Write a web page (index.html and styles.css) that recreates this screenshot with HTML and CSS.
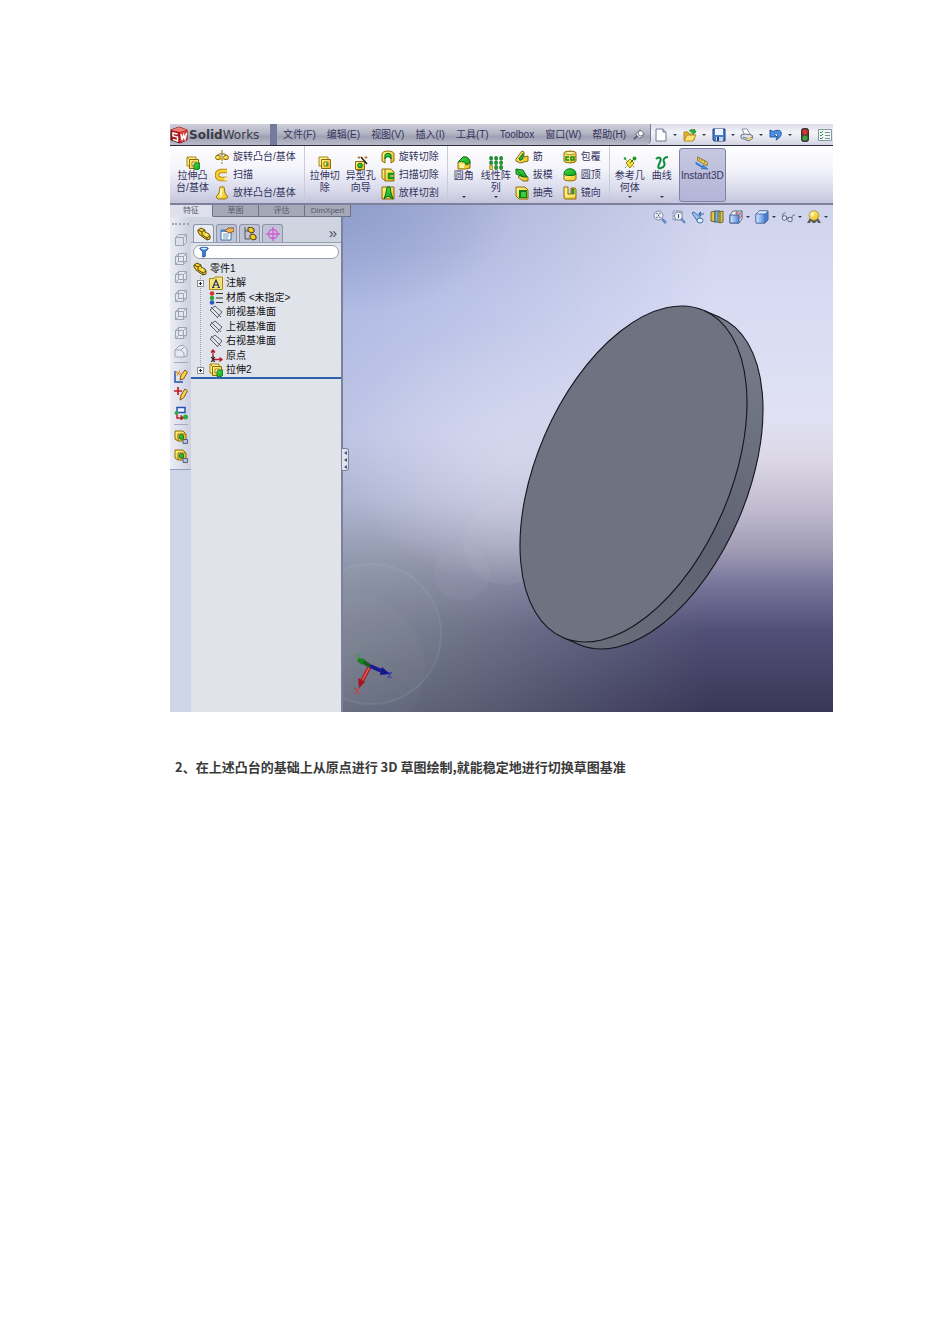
FILE: index.html
```html
<!DOCTYPE html>
<html lang="zh-CN">
<head>
<meta charset="utf-8">
<title>SolidWorks</title>
<link rel="stylesheet" href="styles.css">
</head>
<body>
<svg class="sprite" aria-hidden="true">
  <defs>
    <linearGradient id="gold" x1="0" y1="0" x2="1" y2="1"><stop offset="0" stop-color="#fffa8c"/><stop offset="1" stop-color="#eebb1c"/></linearGradient>
    <linearGradient id="leaf" x1="0" y1="0" x2="1" y2="1"><stop offset="0" stop-color="#4fe04a"/><stop offset="1" stop-color="#0b9f1c"/></linearGradient>
    <linearGradient id="sky" x1="0" y1="0" x2="1" y2="0"><stop offset="0" stop-color="#d6ebff"/><stop offset="1" stop-color="#4c86dc"/></linearGradient>
  </defs>
  <symbol id="logo" viewBox="0 0 18 18"><path d="M1 4l8-3 8 3v10l-7 3-9-3z" fill="#a81a20" stroke="#701014"/><path d="M1 4l8-3 8 3-7 2z" fill="#ef8078"/><path d="M10 6l7-2v10l-7 3z" fill="#dc3a3a"/><path d="M7.500 8L3 7v3l4.500 1v4L3 13.500M11 8l1.200 6 1.500-5 1.300 4L16.500 7" fill="none" stroke="#fff" stroke-width="1.500"/></symbol>
  <symbol id="boss" viewBox="0 0 14 14"><path d="M1 1h9v9H1z" fill="#fff68a" stroke="#a88312"/><path d="M1 1l3 3" stroke="#a88312"/><path d="M3.500 3.500h9v9h-9z" fill="url(#gold)" stroke="#8d6b0a"/><path d="M6 6h4v4H6z" fill="#fffbd2" stroke="#a88312"/><path d="M8 8l2-1h4v5l-1.500 1.500H8z" fill="url(#leaf)" stroke="#08701a" stroke-width=".8"/></symbol>
  <symbol id="cut" viewBox="0 0 14 14"><path d="M1 1h9v9H1z" fill="#fff68a" stroke="#a88312"/><path d="M3.500 3.500h9v9h-9z" fill="url(#gold)" stroke="#8d6b0a"/><path d="M6 6h4v4H6z" fill="#fff9b0" stroke="#8d6b0a"/><path d="M8 7h2v3H8z" fill="#36a83a"/></symbol>
  <symbol id="revolve" viewBox="0 0 14 14"><path d="M7 0v14" stroke="#8b6a12" stroke-dasharray="3 1"/><path d="M2 6c0-3 10-3 10 0" fill="none" stroke="#7a5b0c"/><ellipse cx="3" cy="7.500" rx="2.500" ry="2.200" fill="url(#gold)" stroke="#8d6b0a"/><ellipse cx="11" cy="7.500" rx="2.500" ry="2.200" fill="url(#gold)" stroke="#8d6b0a"/><path d="M5 8.500h4" stroke="#caa018" stroke-width="2"/></symbol>
  <symbol id="sweep" viewBox="0 0 14 14"><path d="M12 3H6a4 4 0 0 0 0 8h6" fill="none" stroke="#a27a0c" stroke-width="4.500"/><path d="M12 3H6a4 4 0 0 0 0 8h5.500" fill="none" stroke="#f7cf2b" stroke-width="3"/><path d="M9.500 9.500h2.500v3H9.500z" fill="#fff6b0"/></symbol>
  <symbol id="loft" viewBox="0 0 14 14"><path d="M5 1h4l1 6 3 4-3 2H3l-2-2 3-4z" fill="url(#gold)" stroke="#9a760c"/><path d="M6 3v8" stroke="#fffbd0" stroke-width="1.500"/></symbol>
  <symbol id="wizard" viewBox="0 0 14 14"><path d="M1.500 5.500h9v8h-9z" fill="url(#gold)" stroke="#8d6b0a"/><circle cx="6" cy="9.500" r="2.300" fill="url(#leaf)" stroke="#08701a"/><path d="M7 1l6 7" stroke="#222" stroke-width="1.500"/><path d="M5 0v3M3.500 1.500h3M12 0v3M10.500 1.500h3" stroke="#b9772a"/></symbol>
  <symbol id="revcut" viewBox="0 0 14 14"><path d="M1 4c0-4 12-4 12 0v7l-3 2V8c0-3-6-3-6 0v5l-3-2z" fill="url(#gold)" stroke="#8d6b0a"/><path d="M4 5c0-2 6-2 6 0v4c0-3-6-3-6 0z" fill="url(#leaf)" stroke="#08701a"/></symbol>
  <symbol id="sweepcut" viewBox="0 0 14 14"><path d="M1 1h9l3 3v9H4l-3-3z" fill="url(#gold)" stroke="#8d6b0a"/><path d="M4 1v12" stroke="#8d6b0a"/><path d="M13 6H8v4h5" fill="none" stroke="#149a22" stroke-width="2.500"/></symbol>
  <symbol id="loftcut" viewBox="0 0 14 14"><path d="M1 1h12v12H1z" fill="url(#gold)" stroke="#8d6b0a"/><path d="M6 1h3l1 6 2 6-5-3-4 3 2-6z" fill="url(#leaf)" stroke="#08701a"/></symbol>
  <symbol id="fillet" viewBox="0 0 14 14"><path d="M1 13V6l5-5h3c3 1 4 3 4 6v5l-4 1z" fill="url(#gold)" stroke="#8d6b0a"/><path d="M1 6l5-5h3c3 1 4 3 4 6L9 9c0-3-3-4-8-3z" fill="url(#leaf)" stroke="#08701a"/><path d="M3 8h4v4H3z" fill="#fff7a8"/></symbol>
  <symbol id="pattern" viewBox="0 0 14 14"><g fill="#18a428" stroke="#0b5d16" stroke-width=".6"><rect x=".7" y=".5" width="2.800" height="3.500" rx="1"/><rect x="5.700" y=".5" width="2.800" height="3.500" rx="1"/><rect x="10.700" y=".5" width="2.800" height="3.500" rx="1"/><rect x=".7" y="5" width="2.800" height="3.500" rx="1"/><rect x="5.700" y="5" width="2.800" height="3.500" rx="1"/><rect x="10.700" y="5" width="2.800" height="3.500" rx="1"/><rect x="5.700" y="9.500" width="2.800" height="4" rx="1"/><rect x="10.700" y="9.500" width="2.800" height="4" rx="1"/></g><path d="M.7 9.500h2.800v4H.7z" fill="#f0c72b" stroke="#8d6b0a" stroke-width=".6"/></symbol>
  <symbol id="rib" viewBox="0 0 14 14"><path d="M1 9l6-8 2 1v5l4-1v5l-8 2-4-2z" fill="url(#gold)" stroke="#8d6b0a"/><path d="M4 8.500l4-5v5l-3 2z" fill="url(#leaf)" stroke="#08701a"/></symbol>
  <symbol id="draft" viewBox="0 0 14 14"><path d="M8 6l5 3v4H8L3 9z" fill="url(#gold)" stroke="#8d6b0a"/><path d="M1 1l7 1 4 7H8L1 6z" fill="url(#leaf)" stroke="#08701a"/><path d="M1 1l7 8" stroke="#08701a" fill="none"/></symbol>
  <symbol id="shell" viewBox="0 0 14 14"><path d="M1 1h9l3 3v9H4l-3-3z" fill="url(#gold)" stroke="#8d6b0a"/><path d="M4 4h8v8H4z" fill="#0c7e1b"/><path d="M6 6h5v5H6z" fill="#37cf3f"/></symbol>
  <symbol id="wrap" viewBox="0 0 14 14"><path d="M1 3c0-2.500 12-2.500 12 0v8c0 2.500-12 2.500-12 0z" fill="url(#gold)" stroke="#8d6b0a"/><ellipse cx="7" cy="3" rx="5.500" ry="1.600" fill="#fff5a0" stroke="#8d6b0a" stroke-width=".7"/><path d="M6 7H3v3h3M8 10V7h3v3z" fill="none" stroke="#0f8f20" stroke-width="1.500"/></symbol>
  <symbol id="dome" viewBox="0 0 14 14"><path d="M1 6h12v5c0 2.500-12 2.500-12 0z" fill="url(#gold)" stroke="#8d6b0a"/><path d="M1 6c0-7 12-7 12 0 0 2-12 2-12 0z" fill="url(#leaf)" stroke="#08701a"/></symbol>
  <symbol id="mirror" viewBox="0 0 14 14"><path d="M1 1h4v7h3V2h4l1 1v10H2l-1-2z" fill="url(#gold)" stroke="#8d6b0a"/><path d="M3 2v8h8V4" fill="none" stroke="#fff7a0"/><path d="M9 3h2v5H9z" fill="#33b33a" stroke="#08701a" stroke-width=".7"/></symbol>
  <symbol id="refgeo" viewBox="0 0 14 14"><path d="M1 2l11 10M2 12L12 2" stroke="#68a030" stroke-dasharray="2 1"/><path d="M7 3l4 4-4 5-4-5z" fill="#f5df3b" stroke="#a08010"/><circle cx="11.500" cy="2.500" r="2" fill="#1b9e2d"/><circle cx="2" cy="2.500" r="1.300" fill="#1b9e2d"/><path d="M7 7l4-4" stroke="#137d1e"/></symbol>
  <symbol id="curve" viewBox="0 0 14 14"><path d="M1 3c3-3 6-1 4 3s-3 7 1 6 4-4 3-6 0-5 4-5" fill="none" stroke="#0c8d3a" stroke-width="2"/></symbol>
  <symbol id="instant" viewBox="0 0 16 16"><path d="M3 1l11 6v4L3 5z" fill="#f6dc55" stroke="#826d24"/><path d="M5 3v2M8 4v2M11 6v2" stroke="#826d24"/><path d="M1 7l8 5 0-2 6 5-8-.5 1-1.500L1 9z" fill="#3c8de0" stroke="#1c5fb0" stroke-width=".6"/></symbol>
  <symbol id="pin" viewBox="0 0 14 14"><path d="M1 12l5-5" stroke="#444a5c" stroke-width="1.500"/><path d="M3 6l5 5 2-2 3-3-5-5-3 3z" fill="#e8eaf2" stroke="#4c5264"/><circle cx="9" cy="5" r="3" fill="#fff" stroke="#6a7082"/></symbol>
  <symbol id="new" viewBox="0 0 14 14"><path d="M2 1h7l3 3v9H2z" fill="#fff" stroke="#6d7a94"/><path d="M9 1v3h3" fill="#c8d2e4" stroke="#6d7a94"/></symbol>
  <symbol id="open" viewBox="0 0 14 14"><path d="M1 12V4h4l1 2h5v6z" fill="#e6b62c" stroke="#b08a28"/><path d="M1 13l3-6h9l-3 6z" fill="#ffe376" stroke="#b08a28"/><path d="M6 3c2-2 4-2 5 0V1l2 3-3 2" fill="#33b23b" stroke="#14801f" stroke-width=".8"/></symbol>
  <symbol id="save" viewBox="0 0 14 14"><path d="M1 1h12v12H2l-1-1z" fill="#4a7cc8" stroke="#1e3f82"/><path d="M3 1h8v6H3z" fill="#eef4ff"/><path d="M4 9h7v4H4z" fill="#c5d5ee"/><path d="M5 9h2v4H5z" fill="#1e3f82"/></symbol>
  <symbol id="print" viewBox="0 0 14 14"><path d="M2 1h5l3 5-5 2z" fill="#fff" stroke="#8790a8"/><path d="M1 7l4-1 7 1 1 3-4 3-8-3z" fill="#dfe3ec" stroke="#6d768c"/><path d="M3 9l6 2 3-2" stroke="#6d768c" fill="none"/><path d="M7 10l3-1 2 2-3 1z" fill="#f0d050"/></symbol>
  <symbol id="undo" viewBox="0 0 14 14"><path d="M1 2v7h7L5.500 6.500C8 4 10 6 7 12c8-4 7-13-3-8.500z" fill="#4e91dc" stroke="#1e57a8"/></symbol>
  <symbol id="light" viewBox="0 0 14 14"><rect x="3.500" y=".5" width="7" height="13" rx="2" fill="#5a3b3b" stroke="#333"/><circle cx="7" cy="4" r="2.500" fill="#e33028"/><circle cx="7" cy="10" r="2.500" fill="#2fae3a"/></symbol>
  <symbol id="options" viewBox="0 0 14 14"><path d="M.5 1.500h13v11H.5z" fill="#f2f8f6" stroke="#8298a2"/><path d="M7 4.500h5M7 7.500h5M7 10.500h5" stroke="#75909a"/><path d="M2 4l1 1 2-2M2 7l1 1 2-2M2 10l1 1 2-2" fill="none" stroke="#2a9c44"/></symbol>
  <symbol id="zoomfit" viewBox="0 0 14 14"><circle cx="5.500" cy="5.500" r="4.500" fill="#eaf1fa" stroke="#7e8a9e"/><path d="M9 9l4 4" stroke="#5d8ac0" stroke-width="2.500"/><path d="M3.500 3.500h1M6.500 3.500h1M3.500 7.500h1M6.500 7.500h1M5 5.500h1" stroke="#333c50" stroke-width="1.300"/></symbol>
  <symbol id="zoomarea" viewBox="0 0 14 14"><path d="M1 1h9v9H1z" fill="none" stroke="#7e8a9e" stroke-dasharray="2 1"/><circle cx="6.500" cy="6" r="4" fill="#eaf1fa" stroke="#7e8a9e"/><path d="M9.500 9l3.500 4" stroke="#5d8ac0" stroke-width="2"/><path d="M6.500 4v4" stroke="#445"/></symbol>
  <symbol id="prev" viewBox="0 0 14 14"><path d="M1 3l6 9 4-3-8-7z" fill="#9cc4ee" stroke="#3f6ea8"/><ellipse cx="9" cy="10.500" rx="3" ry="2.500" fill="#e3f0fc" stroke="#3f6ea8"/><path d="M13 4H8M10 2L8 4l2 2" fill="none" stroke="#2e68b0" stroke-width="1.200"/></symbol>
  <symbol id="section" viewBox="0 0 14 14"><path d="M1 2l4-1v11l-4-1z" fill="#e5c63a" stroke="#6d6430"/><path d="M5 1h5v11H5z" fill="#7bb6ec" stroke="#375b88"/><path d="M8 2l5-1v11l-3 1-2-1z" fill="#e5c63a" stroke="#6d6430"/><path d="M10 2v10" stroke="#375b88"/></symbol>
  <symbol id="orient" viewBox="0 0 14 14"><path d="M1 5l3-4h9v8l-3 4H1z" fill="#f4f7fc" stroke="#5b6884"/><path d="M1 5h9v8H1z" fill="url(#sky)" stroke="#46639a"/><path d="M10 5l3-4M8 1v4" stroke="#5b6884"/><path d="M6 3h5M11 6v3M12 4v3" stroke="#c65050"/></symbol>
  <symbol id="display" viewBox="0 0 14 14"><path d="M1 4l3-3h9v9l-3 3H1z" fill="#4c83d6" stroke="#44639c"/><path d="M1 4l3-3h9l-3 3z" fill="#e6f2ff" stroke="#44639c" stroke-width=".6"/><path d="M1 4h9v9H1z" fill="url(#sky)" stroke="#44639c" stroke-width=".6"/></symbol>
  <symbol id="glasses" viewBox="0 0 14 14"><circle cx="3.500" cy="8" r="2.300" fill="#dfe6f2" stroke="#5d687e"/><circle cx="9" cy="9.500" r="2.300" fill="#dfe6f2" stroke="#5d687e"/><path d="M1.500 7c0-3 1-4 3-4M11 8.500c0-3 1-4 3-3M5.500 7.500l2 1" fill="none" stroke="#5d687e"/></symbol>
  <symbol id="scene" viewBox="0 0 14 14"><path d="M0 13l3-5h8l3 5h-3l-1-2-2 2H6l-2-2-1 2z" fill="#5b5b58"/><circle cx="7" cy="5.500" r="4.800" fill="url(#gold)" stroke="#a17a18" stroke-width=".7"/><circle cx="5.500" cy="4" r="1.500" fill="#fff9cc"/></symbol>
  <symbol id="part" viewBox="0 0 14 14"><path d="M1 3l3-2 4 2v2l4 2 1 2v3l-3 1-7-5-2-3z" fill="#f5d133" stroke="#5a480c"/><path d="M1 3l4 2 3-2M5 5v3l5 3 3-2M10 11v2" fill="none" stroke="#5a480c"/><circle cx="9.500" cy="7.500" r="1" fill="#fff7b0"/></symbol>
  <symbol id="prop" viewBox="0 0 14 14"><path d="M1 3h10v10H1z" fill="#fff" stroke="#3a6fa8"/><path d="M1 3h7v2H1z" fill="#4f8fd0"/><path d="M3 7h6M3 9h6M3 11h5" stroke="#6c98c8"/><path d="M5 4l3-3 6 0v3l-4 2z" fill="#f1b45c" stroke="#8d5a1c"/></symbol>
  <symbol id="config" viewBox="0 0 14 14"><path d="M2 0v12h5M2 4h5" stroke="#555" fill="none"/><path d="M5 1l3-1 3 2v3L8 6 5 4z" fill="#f0cb2e" stroke="#4a3a08"/><path d="M7 8l3-1 3 2v3l-3 1-3-2z" fill="#f0cb2e" stroke="#4a3a08"/></symbol>
  <symbol id="target" viewBox="0 0 14 14"><circle cx="7" cy="7" r="4.500" fill="none" stroke="#cf5ccf" stroke-width="1.300"/><path d="M7 0v14M0 7h14" stroke="#cf5ccf" stroke-width="1.300"/></symbol>
  <symbol id="funnel" viewBox="0 0 14 14"><path d="M2 3c0-2 10-2 10 0L8.500 7v5l-3 1V7z" fill="#3f83d6" stroke="#174c94"/><ellipse cx="7" cy="3" rx="3.500" ry="1" fill="#d8ecff"/></symbol>
  <symbol id="note" viewBox="0 0 14 14"><path d="M.5 2.500H5L6 1h7.500v12.500H.5z" fill="#f8e373" stroke="#a8871c"/><path d="M4 11l3-7 3 7M5 9h4M3 11.500h2.500M8.500 11.500H11" fill="none" stroke="#25356e" stroke-width="1.200"/></symbol>
  <symbol id="material" viewBox="0 0 14 14"><circle cx="3" cy="2.500" r="2.300" fill="#d63434"/><circle cx="3" cy="7" r="2.300" fill="#2da53c"/><circle cx="3" cy="11.500" r="2.300" fill="#2f57c4"/><path d="M7 2.500h7M7 7h7M7 11.500h7" stroke="#333" stroke-width="1.200"/></symbol>
  <symbol id="plane" viewBox="0 0 14 14"><path d="M1 5l5-4M2 2l10 10M6 1l7 6M1 5l8 8M8 13l5-6" fill="none" stroke="#5b5f68"/></symbol>
  <symbol id="origin" viewBox="0 0 14 14"><path d="M4 10V1M2 3.500L4 1l2 2.500M4 10.500h9M10.500 8.500l2.500 2-2.500 2" fill="none" stroke="#b51c24" stroke-width="1.300"/><path d="M2 8l4 5M6 8l-4 5M4 7v6" stroke="#222"/></symbol>
  <symbol id="wire" viewBox="0 0 14 14"><path d="M1.500 4.500l3-3h8v8l-3 3h-8z" fill="#e4e7ef" stroke="#9ea3b0"/><path d="M1.500 4.500h8v8M9.500 4.500l3-3M4.500 1.500v8h8M4.500 9.500l-3 3" fill="none" stroke="#9ea3b0"/></symbol>
  <symbol id="cube" viewBox="0 0 14 14"><path d="M1.500 4.500l3-3h8v8l-3 3h-8z" fill="#dde0ea" stroke="#9ea3b0"/><path d="M1.500 4.500h8v8M9.500 4.500l3-3" fill="none" stroke="#9ea3b0"/></symbol>
  <symbol id="house" viewBox="0 0 14 14"><path d="M1 6l4-4 4-1 4 4v7l-3 1H1zM1 6h6l3 3v4M7 6l4-4" fill="#e6e9f1" stroke="#9ea3b0"/></symbol>
  <symbol id="sketch" viewBox="0 0 14 14"><path d="M1 2v11h8" fill="none" stroke="#2452b0" stroke-width="1.500"/><path d="M6 11l1-5 4-5 2.500 2-4 7z" fill="#f9d04a" stroke="#80591a"/><path d="M2 2l5 5M6 1L3 7M1 4h6" stroke="#e19427"/></symbol>
  <symbol id="sketch3d" viewBox="0 0 14 14"><path d="M4 0v8M0 4h8" stroke="#c61e24" stroke-width="1.700"/><path d="M6 13l1-5 4-6 2.500 2-4 7z" fill="#f9d04a" stroke="#80591a"/></symbol>
  <symbol id="relation" viewBox="0 0 14 14"><path d="M3 1.500h8v5H3z" fill="#eef4ff" stroke="#2452b0" stroke-width="1.500"/><path d="M3 8v4h6M6.500 9.500L9 12l-2.500 2" fill="none" stroke="#b51c24" stroke-width="1.400"/><circle cx="2.500" cy="7" r="2" fill="#2fae3a"/><circle cx="11.500" cy="11" r="2.500" fill="#2fae3a"/></symbol>
  <symbol id="copybody" viewBox="0 0 14 14"><path d="M1 1h8l3 3v7H4L1 9z" fill="url(#gold)" stroke="#8d6b0a"/><path d="M4 4h8M4 4v7" stroke="#8d6b0a"/><circle cx="7.500" cy="7" r="2.300" fill="url(#leaf)" stroke="#08701a"/><path d="M9 9.500h4.500v4H9z" fill="#b9c3dc" stroke="#546080"/></symbol>
</svg>

<main class="page">
  <section class="app" aria-label="SolidWorks">
    <header class="titlebar">
      <div class="menubar">
        <span class="brand"><svg class="brand-icon"><use href="#logo"/></svg><span><b>Solid</b>Works</span></span>
        <nav class="menu">
          <a href="#">文件(F)</a><a href="#">编辑(E)</a><a href="#">视图(V)</a><a href="#">插入(I)</a><a href="#">工具(T)</a><a href="#">Toolbox</a><a href="#">窗口(W)</a><a href="#">帮助(H)</a>
        </nav>
        <button class="pin" aria-label="固定"><svg class="icon small"><use href="#pin"/></svg></button>
      </div>
      <div class="quick">
        <button class="drop" aria-label="新建"><svg class="icon"><use href="#new"/></svg></button>
        <button class="drop" aria-label="打开"><svg class="icon"><use href="#open"/></svg></button>
        <button class="drop" aria-label="保存"><svg class="icon"><use href="#save"/></svg></button>
        <button class="drop" aria-label="打印"><svg class="icon"><use href="#print"/></svg></button>
        <button class="drop" aria-label="撤消"><svg class="icon"><use href="#undo"/></svg></button>
        <button aria-label="重建"><svg class="icon"><use href="#light"/></svg></button>
        <button aria-label="选项"><svg class="icon"><use href="#options"/></svg></button>
      </div>
    </header>

    <div class="ribbon">
      <div class="group">
        <button class="big wide"><svg class="icon"><use href="#boss"/></svg><span>拉伸凸<br>台/基体</span></button>
        <div class="stack">
          <button><svg class="icon"><use href="#revolve"/></svg>旋转凸台/基体</button>
          <button><svg class="icon"><use href="#sweep"/></svg>扫描</button>
          <button><svg class="icon"><use href="#loft"/></svg>放样凸台/基体</button>
        </div>
      </div>
      <div class="group">
        <button class="big"><svg class="icon"><use href="#cut"/></svg><span>拉伸切<br>除</span></button>
        <button class="big"><svg class="icon"><use href="#wizard"/></svg><span>异型孔<br>向导</span></button>
        <div class="stack">
          <button><svg class="icon"><use href="#revcut"/></svg>旋转切除</button>
          <button><svg class="icon"><use href="#sweepcut"/></svg>扫描切除</button>
          <button><svg class="icon"><use href="#loftcut"/></svg>放样切割</button>
        </div>
      </div>
      <div class="group tight">
        <button class="big more"><svg class="icon"><use href="#fillet"/></svg><span>圆角</span></button>
        <button class="big more"><svg class="icon"><use href="#pattern"/></svg><span>线性阵<br>列</span></button>
        <div class="stack">
          <button><svg class="icon"><use href="#rib"/></svg>筋</button>
          <button><svg class="icon"><use href="#draft"/></svg>拔模</button>
          <button><svg class="icon"><use href="#shell"/></svg>抽壳</button>
        </div>
        <div class="stack second">
          <button><svg class="icon"><use href="#wrap"/></svg>包覆</button>
          <button><svg class="icon"><use href="#dome"/></svg>圆顶</button>
          <button><svg class="icon"><use href="#mirror"/></svg>镜向</button>
        </div>
      </div>
      <div class="group last">
        <button class="big more"><svg class="icon"><use href="#refgeo"/></svg><span>参考几<br>何体</span></button>
        <button class="big more"><svg class="icon"><use href="#curve"/></svg><span>曲线</span></button>
        <button class="big pressed"><svg class="icon"><use href="#instant"/></svg><span>Instant3D</span></button>
      </div>
    </div>

    <div class="workspace">
      <div class="side">
        <div class="ribbon-tabs">
          <button class="current">特征</button><button>草图</button><button>评估</button><button>DimXpert</button>
        </div>
        <div class="panes">
          <div class="rail">
            <div class="tools">
              <button aria-label="前视"><svg class="icon"><use href="#cube"/></svg></button>
              <button aria-label="后视"><svg class="icon"><use href="#wire"/></svg></button>
              <button aria-label="左视"><svg class="icon"><use href="#wire"/></svg></button>
              <button aria-label="右视"><svg class="icon"><use href="#wire"/></svg></button>
              <button aria-label="上视"><svg class="icon"><use href="#wire"/></svg></button>
              <button aria-label="下视"><svg class="icon"><use href="#wire"/></svg></button>
              <button aria-label="等轴测"><svg class="icon"><use href="#house"/></svg></button>
              <hr>
              <button aria-label="草图绘制"><svg class="icon"><use href="#sketch"/></svg></button>
              <button aria-label="3D草图"><svg class="icon"><use href="#sketch3d"/></svg></button>
              <button aria-label="几何关系"><svg class="icon"><use href="#relation"/></svg></button>
              <hr>
              <button aria-label="复制实体"><svg class="icon"><use href="#copybody"/></svg></button>
              <button aria-label="移动实体"><svg class="icon"><use href="#copybody"/></svg></button>
            </div>
          </div>
          <div class="manager">
            <div class="manager-tabs">
              <button class="current" aria-label="设计树"><svg class="icon"><use href="#part"/></svg></button>
              <button aria-label="属性"><svg class="icon"><use href="#prop"/></svg></button>
              <button aria-label="配置"><svg class="icon"><use href="#config"/></svg></button>
              <button aria-label="尺寸专家"><svg class="icon"><use href="#target"/></svg></button>
              <button class="expand">»</button>
            </div>
            <label class="filter"><svg class="icon small"><use href="#funnel"/></svg><input type="text" aria-label="过滤器"></label>
            <ul class="tree">
              <li class="root"><svg class="icon"><use href="#part"/></svg>零件1</li>
              <li><button class="plus" aria-label="展开注解"></button><svg class="icon"><use href="#note"/></svg>注解</li>
              <li><svg class="icon"><use href="#material"/></svg>材质 &lt;未指定&gt;</li>
              <li><svg class="icon"><use href="#plane"/></svg>前视基准面</li>
              <li><svg class="icon"><use href="#plane"/></svg>上视基准面</li>
              <li><svg class="icon"><use href="#plane"/></svg>右视基准面</li>
              <li><svg class="icon"><use href="#origin"/></svg>原点</li>
              <li><button class="plus" aria-label="展开拉伸2"></button><svg class="icon"><use href="#boss"/></svg>拉伸2</li>
            </ul>
            <button class="handle" aria-label="折叠面板"><i></i><i></i><i></i></button>
          </div>
        </div>
      </div>
      <div class="view">
        <svg class="model" viewBox="0 0 490 507" role="img" aria-label="圆盘模型">
          <defs>
            <linearGradient id="bgRight" x1="0" y1="0" x2="0" y2="1">
              <stop offset="0" stop-color="#d0d3ec"/><stop offset=".2" stop-color="#d8dbf3"/><stop offset=".42" stop-color="#e0e1f3"/><stop offset=".5" stop-color="#dcd8e6"/><stop offset=".6" stop-color="#c0bbcf"/><stop offset=".68" stop-color="#a09cb5"/><stop offset=".75" stop-color="#77749a"/><stop offset=".84" stop-color="#514f76"/><stop offset="1" stop-color="#3a3858"/>
            </linearGradient>
            <linearGradient id="bgLeft" x1="0" y1="0" x2="0" y2="1">
              <stop offset="0" stop-color="#a0aad3"/><stop offset=".2" stop-color="#b0bbe4"/><stop offset=".45" stop-color="#bec4e5"/><stop offset=".58" stop-color="#b0b6d2"/><stop offset=".7" stop-color="#9298ad"/><stop offset=".82" stop-color="#7d8494"/><stop offset="1" stop-color="#666c7e"/>
            </linearGradient>
            <linearGradient id="fade" x1="0" y1="0" x2="1" y2="0"><stop offset="0" stop-color="#fff"/><stop offset=".25" stop-color="#bbb"/><stop offset=".75" stop-color="#000"/></linearGradient>
            <mask id="leftMask"><rect width="490" height="507" fill="url(#fade)"/></mask>
            <radialGradient id="glow"><stop offset="0" stop-color="#d8daf0" stop-opacity=".7"/><stop offset="1" stop-color="#d8daf0" stop-opacity="0"/></radialGradient>
            <radialGradient id="corner"><stop offset="0" stop-color="#8797c8" stop-opacity=".7"/><stop offset="1" stop-color="#8797c8" stop-opacity="0"/></radialGradient>
            <linearGradient id="rim" x1="0" y1="0" x2="0" y2="1"><stop offset="0" stop-color="#777d8c"/><stop offset=".6" stop-color="#5f6272"/><stop offset="1" stop-color="#696c79"/></linearGradient>
          </defs>
          <rect width="490" height="507" fill="url(#bgRight)"/>
          <rect width="490" height="507" fill="url(#bgLeft)" mask="url(#leftMask)"/>
          <ellipse cx="0" cy="0" rx="170" ry="110" fill="url(#corner)"/>
          <ellipse cx="170" cy="250" rx="170" ry="130" fill="url(#glow)"/>
          <circle cx="28" cy="429" r="70" fill="#dbe3e4" fill-opacity=".03" stroke="#cfd8d8" stroke-opacity=".1" stroke-width="2"/>
          <circle cx="10" cy="462" r="72" fill="#dbe3e4" fill-opacity=".03"/>
          <circle cx="119" cy="368" r="28" fill="#d9dcea" fill-opacity=".05"/>
          <circle cx="162" cy="338" r="42" fill="#e2e4f0" fill-opacity=".05"/>
          <g stroke="#15161d" stroke-width="1.100">
            <ellipse cx="306.500" cy="276" rx="96.900" ry="178.100" transform="rotate(23.300 306.500 276)" fill="url(#rim)"/>
            <path d="M361.200 105.600l16 7L236 439.400l-16-7z" fill="#6d717f" stroke="none"/>
            <path d="M361.200 105.600l16 7M236 439.400l-16-7" fill="none"/>
            <ellipse cx="290.500" cy="269" rx="96.900" ry="178.100" transform="rotate(23.300 290.500 269)" fill="#6f7280"/>
          </g>
          <g class="axes">
            <path d="M27 461l-8 15" stroke="#a82026" stroke-width="4"/><path d="M27 461l-8 15" stroke="#ee5d5a" stroke-width="1.500"/>
            <path d="M15 473l7 4-6 6z" fill="#a3161b"/>
            <path d="M27 461l-8-5" stroke="#175f20" stroke-width="4"/><path d="M15 453l7 1-3 6-5-4z" fill="#188126"/>
            <path d="M27 461l14 6" stroke="#1b1b94" stroke-width="4"/><path d="M39 462l8 7-10 1z" fill="#16168c"/>
            <text x="12" y="455" fill="#2a9a3a">Y</text><text x="44" y="473" fill="#2222cc">Z</text><text x="11" y="489" fill="#e02a2a">X</text>
          </g>
        </svg>
        <div class="heads-up">
          <button aria-label="整屏显示"><svg class="icon"><use href="#zoomfit"/></svg></button>
          <button aria-label="局部放大"><svg class="icon"><use href="#zoomarea"/></svg></button>
          <button aria-label="上一视图"><svg class="icon"><use href="#prev"/></svg></button>
          <button aria-label="剖面视图"><svg class="icon"><use href="#section"/></svg></button>
          <button class="drop" aria-label="视图定向"><svg class="icon"><use href="#orient"/></svg></button>
          <button class="drop" aria-label="显示样式"><svg class="icon"><use href="#display"/></svg></button>
          <button class="drop" aria-label="隐藏/显示"><svg class="icon"><use href="#glasses"/></svg></button>
          <button class="drop" aria-label="应用布景"><svg class="icon"><use href="#scene"/></svg></button>
        </div>
      </div>
    </div>
  </section>
  <p class="caption">2、在上述凸台的基础上从原点进行 3D 草图绘制,就能稳定地进行切换草图基准</p>
</main>
</body>
</html>
```
FILE: styles.css
```css
* { box-sizing: border-box; }
body { margin: 0; background: #fff; font-family: "Liberation Sans", "Noto Sans CJK SC", sans-serif; }
button { margin: 0; padding: 0; border: 0; background: none; font: inherit; color: inherit; }
.sprite { position: absolute; width: 0; height: 0; }
.page { padding: 124px 117px 40px 170px; }
.app { font-size: 10px; line-height: 12px; color: #33335c; }
.icon { display: block; flex: none; width: 14px; height: 14px; }
.icon.small { width: 12px; height: 12px; }

/* title bar */
.titlebar { display: flex; height: 22px; background: linear-gradient(#d9dae6, #f4f4fa 40%, #d3d4e2); border-bottom: 1px solid #2b2c3c; }
.menubar { display: flex; align-items: center; width: 481px; background: linear-gradient(#cfd0da, #b3b5c4 45%, #9fa1b3 60%, #b9bbca); border-right: 1px solid #777a90; border-radius: 0 0 5px 0; }
.brand { display: flex; align-items: center; align-self: stretch; gap: 1px; width: 107px; border-right: 7px solid #747a9c; font-family: "DejaVu Sans", sans-serif; font-size: 12px; color: #3b3b46; }
.brand-icon { width: 18px; height: 18px; }
.menu { display: flex; gap: 11px; padding-left: 6px; }
.menu a { color: #33335c; text-decoration: none; white-space: nowrap; }
.pin { margin-left: auto; margin-right: 5px; }
.quick { display: flex; flex: 1; align-items: center; justify-content: space-between; padding: 0 1px 0 3px; }
.drop { display: flex; align-items: center; gap: 5px; }
.drop::after, .more::after { content: ""; border: 2px solid transparent; border-top-color: #33364e; border-bottom: 0; }

/* ribbon */
.ribbon { display: flex; height: 59px; background: linear-gradient(#fefeff, #f4f4fb 40%, #dadbec 75%, #c4c5dc); border-bottom: 2px solid #7d819c; }
.group { display: flex; gap: 4px; padding: 0 8px 0 4px; border-right: 1px solid #c9cadb; }
.group.tight { gap: 0; padding-left: 0; }
.group.last { gap: 0; padding-right: 0; border-right: 0; }
.tight .stack { margin-left: 3px; }
.tight .second { margin-left: 10px; }
.big { position: relative; display: flex; flex-direction: column; align-items: center; width: 32px; padding-top: 10px; white-space: nowrap; }
.big.wide { width: 37px; }
.more::after { position: absolute; bottom: 5px; }
.stack { display: flex; flex-direction: column; gap: 4px; padding-top: 4px; }
.stack button { display: flex; align-items: center; gap: 4px; white-space: nowrap; }
.big.pressed { width: 47px; margin: 2px 0 1px 1px; padding-top: 7px; background: linear-gradient(#c6c7e0, #b3b5d8); border: 1px solid #7f82a4; border-radius: 3px; }

/* workspace */
.workspace { display: flex; }
.side { position: relative; z-index: 1; display: flex; flex-direction: column; flex: none; width: 173px; }
.ribbon-tabs { display: grid; grid-template-columns: 43px 46px 46px 46px; width: 181px; height: 12px; font-size: 8px; line-height: 9px; color: #565a6c; }
.ribbon-tabs button { background: #a5a8b7; border: solid #6e7287; border-width: 0 1px 1px 0; }
.ribbon-tabs .current { background: #dfe0ec; border-bottom-color: #dfe0ec; }
.panes { display: flex; flex: 1; }
.rail { flex: none; width: 21px; background: #cdd5e6; }
.tools { display: flex; flex-direction: column; align-items: center; padding: 6px 0 4px; background: linear-gradient(90deg, #eceef5, #ccd0e0); border-bottom: 1px solid #999fb4; }
.tools::before { content: ""; width: 17px; margin-bottom: 6px; border-top: 2px dotted #9ea4b6; }
.tools button { display: grid; place-items: center; height: 18px; }
.tools button:nth-of-type(even) { height: 19px; }
.tools hr { width: 14px; margin: 2px 0 3px; border: 0; border-top: 1px solid #a6acbd; }
.manager { position: relative; flex: 1; min-width: 0; background: #e0e3e9; border-right: 2px solid #7b839b; }
.manager-tabs { display: flex; align-items: flex-end; gap: 2px; height: 26px; padding: 0 4px 0 2px; background: #cfd4e1; border-bottom: 1px solid #979db2; }
.manager-tabs button { display: grid; place-items: center; width: 21px; height: 18px; background: #bfc5d6; border: 1px solid #8d93a9; border-bottom: 0; border-radius: 3px 3px 0 0; }
.manager-tabs .current { background: #e8ebf1; }
.manager-tabs .expand { width: auto; margin-left: auto; background: none; border: 0; font-size: 15px; color: #4a5068; }
.filter { display: flex; align-items: center; height: 14px; margin: 2px; padding-left: 4px; background: #fff; border: 1px solid #969caf; border-radius: 7px; }
.filter input { flex: 1; min-width: 0; height: 10px; padding: 0 4px; border: 0; background: none; font-size: 10px; outline: 0; }
.tree { position: relative; margin: 0; padding: 0; list-style: none; color: #101014; border-bottom: 2px solid #2c62a8; }
.tree::before { content: ""; position: absolute; top: 15px; bottom: 8px; left: 9px; border-left: 1px dotted #9a9fab; }
.tree li { position: relative; display: flex; align-items: center; gap: 3px; height: 14px; padding-left: 18px; white-space: nowrap; }
.tree li:nth-child(odd) { height: 15px; }
.tree .root { padding-left: 2px; }
.plus { position: absolute; left: 6px; width: 7px; height: 7px; background: linear-gradient(#222, #222) center / 3px 1px no-repeat, linear-gradient(#222, #222) center / 1px 3px no-repeat, #fff; border: 1px solid #8a8f9c; }
.handle { position: absolute; top: 231px; right: -8px; display: grid; place-content: center; gap: 3px; width: 7px; height: 23px; background: #dfe3ee; border: 1px solid #7b839b; border-left: 0; border-radius: 0 3px 3px 0; }
.handle i { border: 2px solid transparent; border-right: 3px solid #4c5578; border-left: 0; }

/* viewport */
.view { position: relative; flex: 1; min-width: 0; }
.model { display: block; width: 100%; height: auto; }
.axes { font: 9px "Liberation Serif", serif; }
.heads-up { position: absolute; top: 5px; right: 5px; display: flex; gap: 5px; }
.heads-up .drop { gap: 3px; }

.caption { margin: 45px 0 0 5px; font-family: "Noto Sans CJK SC", sans-serif; font-size: 13px; line-height: 20px; font-weight: 700; color: #3a3a3a; }
```
